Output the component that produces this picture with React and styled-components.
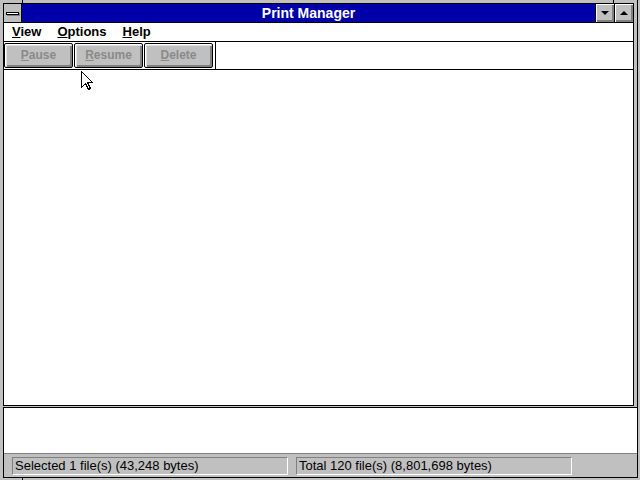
import React from 'react';
import styled, { createGlobalStyle } from 'styled-components';

const Global = createGlobalStyle`
  html, body { margin: 0; padding: 0; background: #c0c0c0; overflow: hidden; }
  body { font-family: "Liberation Sans", Arial, sans-serif; }
`;

const Screen = styled.div`
  position: relative;
  width: 640px;
  height: 480px;
  background: #c0c0c0;
  display: flex;
  flex-direction: column;
  overflow: hidden;
`;

const Frame = styled.div`
  width: 638px;
  height: 407px;
  box-sizing: border-box;
  padding: 3px 3px 1px 3px;
  border-right: 1px solid #000;
  display: flex;
  background:
    linear-gradient(#000, #000) 22px 0 / 1px 3px no-repeat,
    linear-gradient(#000, #000) 613px 0 / 1px 3px no-repeat,
    #c0c0c0;
`;

const Client = styled.div`
  flex: 1;
  display: flex;
  flex-direction: column;
  border: 1px solid #000;
  background: #fff;
`;

const TitleBar = styled.div`
  height: 18px;
  display: flex;
  border-bottom: 1px solid #000;
  flex-shrink: 0;
`;

const SysBox = styled.div`
  width: 17px;
  border-right: 1px solid #000;
  background: #c0c0c0;
  display: flex;
  align-items: center;
  justify-content: center;
`;

const SysBar = styled.div`
  width: 11px;
  height: 1px;
  background: #fff;
  border: 1px solid #000;
  box-shadow: 1px 1px 0 #808080;
`;

const Caption = styled.div`
  flex: 1;
  background: #0000a8;
  color: #fff;
  font-weight: bold;
  font-size: 14px;
  display: flex;
  align-items: center;
  justify-content: center;
`;

const CapButton = styled.div`
  width: 18px;
  border-left: 1px solid #000;
  background: #c0c0c0;
  box-shadow: inset 1px 1px 0 #fff, inset -1px -1px 0 #808080, inset -2px -2px 0 #808080;
  display: flex;
  align-items: center;
  justify-content: center;
`;

const Arrow = styled.div`
  width: 0;
  height: 0;
  margin: 0 1px 1px 0;
  border-left: 4px solid transparent;
  border-right: 4px solid transparent;
  ${(p) => (p.$up ? 'border-bottom: 4px solid #000;' : 'border-top: 4px solid #000;')}
`;

const MenuBar = styled.div`
  height: 18px;
  flex-shrink: 0;
  display: flex;
  align-items: center;
  border-bottom: 1px solid #000;
  font-weight: bold;
  font-size: 13px;
  color: #000;
`;

const MenuItem = styled.span`
  padding: 0 8px;
  line-height: 18px;
`;

const Toolbar = styled.div`
  height: 27px;
  flex-shrink: 0;
  display: flex;
  border-bottom: 1px solid #000;
`;

const ButtonGroup = styled.div`
  display: flex;
  align-items: center;
  gap: 1px;
  padding-right: 2px;
  border-right: 1px solid #000;
`;

const ToolButton = styled.div`
  width: 69px;
  height: 25px;
  box-sizing: border-box;
  border: 1px solid #000;
  border-radius: 2px;
  background: #c0c0c0;
  box-shadow: inset 1px 1px 0 #fff, inset 2px 2px 0 #dfdfdf, inset -1px -1px 0 #808080, inset -2px -2px 0 #808080;
  color: #8a8a8a;
  font-weight: bold;
  font-size: 12px;
  display: flex;
  align-items: center;
  justify-content: center;
  padding-bottom: 1px;
`;

const ListArea = styled.div`
  flex: 1;
  background: #fff;
`;

const FMFrame = styled.div`
  height: 73px;
  box-sizing: border-box;
  padding: 0 2px 2px 3px;
  display: flex;
  background:
    linear-gradient(#000, #000) 22px 71px / 1px 2px no-repeat,
    #c0c0c0;
`;

const FMClient = styled.div`
  flex: 1;
  display: flex;
  flex-direction: column;
  border: 1px solid #000;
`;

const FMList = styled.div`
  flex: 1;
  background: #fff;
`;

const StatusBar = styled.div`
  height: 24px;
  box-sizing: border-box;
  border-top: 1px solid #808080;
  background: #c0c0c0;
  display: flex;
  align-items: center;
  gap: 8px;
  padding-left: 8px;
`;

const StatusPanel = styled.div`
  width: 276px;
  height: 18px;
  box-sizing: border-box;
  border-top: 1px solid #808080;
  border-left: 1px solid #808080;
  border-bottom: 1px solid #fff;
  border-right: 1px solid #fff;
  padding-left: 2px;
  font-size: 13px;
  line-height: 16px;
  color: #000;
  white-space: nowrap;
`;

const Cursor = styled.svg`
  position: absolute;
  left: 81px;
  top: 71px;
`;

export default function App() {
  return (
    <Screen>
      <Global />
      <Frame>
        <Client>
          <TitleBar>
            <SysBox>
              <SysBar />
            </SysBox>
            <Caption>Print Manager</Caption>
            <CapButton>
              <Arrow />
            </CapButton>
            <CapButton>
              <Arrow $up />
            </CapButton>
          </TitleBar>
          <MenuBar>
            <MenuItem>
              <u>V</u>iew
            </MenuItem>
            <MenuItem>
              <u>O</u>ptions
            </MenuItem>
            <MenuItem>
              <u>H</u>elp
            </MenuItem>
          </MenuBar>
          <Toolbar>
            <ButtonGroup>
              <ToolButton>
                <span>
                  <u>P</u>ause
                </span>
              </ToolButton>
              <ToolButton>
                <span>
                  <u>R</u>esume
                </span>
              </ToolButton>
              <ToolButton>
                <span>
                  <u>D</u>elete
                </span>
              </ToolButton>
            </ButtonGroup>
          </Toolbar>
          <ListArea />
        </Client>
      </Frame>
      <FMFrame>
        <FMClient>
          <FMList />
          <StatusBar>
            <StatusPanel>Selected 1 file(s) (43,248 bytes)</StatusPanel>
            <StatusPanel>Total 120 file(s) (8,801,698 bytes)</StatusPanel>
          </StatusBar>
        </FMClient>
      </FMFrame>
      <Cursor width="13" height="20" viewBox="0 0 13 20">
        <path
          d="M0.5 0.5 V16.5 L4.5 12.5 L7.5 18.5 L9.5 17.5 L6.5 11.5 H11.5 Z"
          fill="#fff"
          stroke="#000"
          strokeWidth="1"
          shapeRendering="crispEdges"
        />
      </Cursor>
    </Screen>
  );
}
